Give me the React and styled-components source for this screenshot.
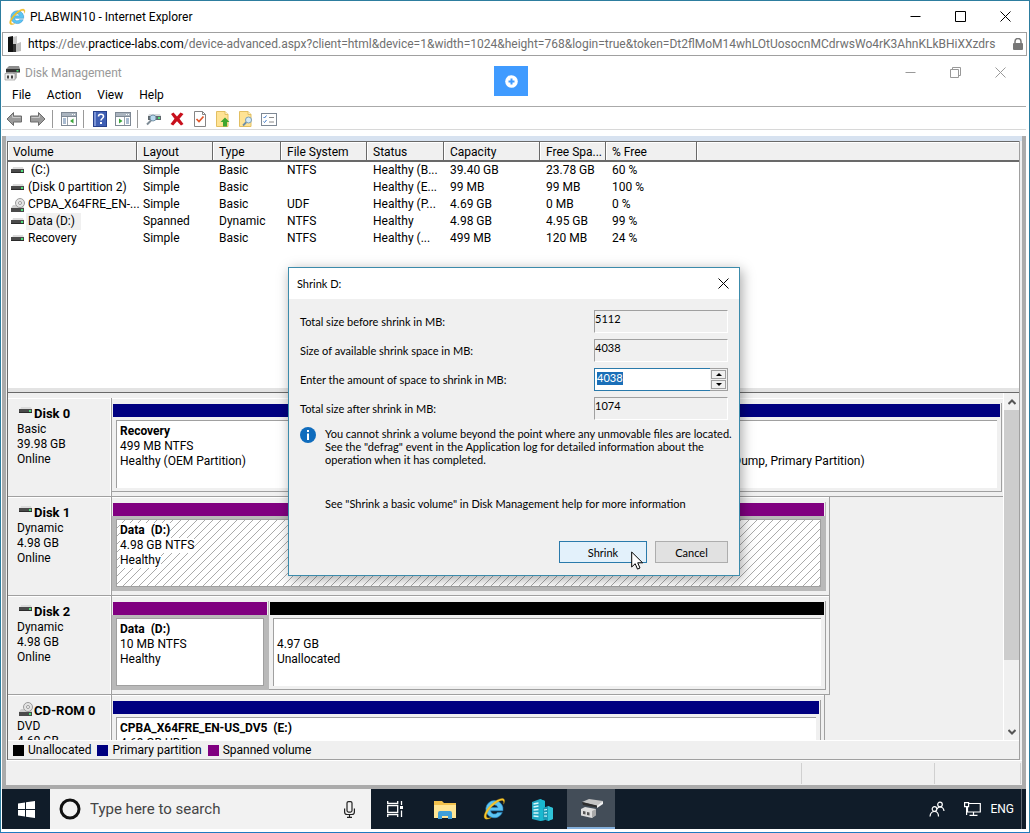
import styled, { createGlobalStyle, css } from 'styled-components';

const COLORS = {
  face: '#f0f0f0',
  shadow: '#a0a0a0',
  dark: '#696969',
  frame: '#ababab',
  navy: '#000080',
  purple: '#800080',
  black: '#000000',
  taskbar: '#101c29',
  accent: '#2d7d9f',
};

const VOLUMES = [
  { name: '(C:)', indent: true, layout: 'Simple', type: 'Basic', fs: 'NTFS', status: 'Healthy (B...', capacity: '39.40 GB', free: '23.78 GB', percent: '60 %' },
  { name: '(Disk 0 partition 2)', layout: 'Simple', type: 'Basic', fs: '', status: 'Healthy (E...', capacity: '99 MB', free: '99 MB', percent: '100 %' },
  { name: 'CPBA_X64FRE_EN-...', disc: true, layout: 'Simple', type: 'Basic', fs: 'UDF', status: 'Healthy (P...', capacity: '4.69 GB', free: '0 MB', percent: '0 %' },
  { name: 'Data (D:)', selected: true, layout: 'Spanned', type: 'Dynamic', fs: 'NTFS', status: 'Healthy', capacity: '4.98 GB', free: '4.95 GB', percent: '99 %' },
  { name: 'Recovery', layout: 'Simple', type: 'Basic', fs: 'NTFS', status: 'Healthy (...', capacity: '499 MB', free: '120 MB', percent: '24 %' },
];

const COLUMNS = [
  { label: 'Volume', width: 129 },
  { label: 'Layout', width: 76 },
  { label: 'Type', width: 68 },
  { label: 'File System', width: 86 },
  { label: 'Status', width: 77 },
  { label: 'Capacity', width: 96 },
  { label: 'Free Spa...', width: 66 },
  { label: '% Free', width: 91 },
];

const DISKS = [
  {
    name: 'Disk 0',
    lines: ['Basic', '39.98 GB', 'Online'],
    full: true,
    share: '100%',
    partitions: [
      { color: 'navy', grow: 190, title: 'Recovery', lines: ['499 MB NTFS', 'Healthy (OEM Partition)'] },
      { color: 'navy', grow: 253, title: '', lines: ['99 MB'] },
      { color: 'navy', grow: 442, title: '', lines: ['39.40 GB NTFS', 'Healthy (Boot, Page File, Crash Dump, Primary Partition)'] },
    ],
  },
  {
    name: 'Disk 1',
    lines: ['Dynamic', '4.98 GB', 'Online'],
    share: '718px',
    partitions: [
      { color: 'purple', grow: 1, title: 'Data  (D:)', lines: ['4.98 GB NTFS', 'Healthy'], active: true, hatched: true },
    ],
  },
  {
    name: 'Disk 2',
    lines: ['Dynamic', '4.98 GB', 'Online'],
    share: '718px',
    partitions: [
      { color: 'purple', grow: 155, title: 'Data  (D:)', lines: ['10 MB NTFS', 'Healthy'], active: true },
      { color: 'black', grow: 558, title: '', lines: ['4.97 GB', 'Unallocated'] },
    ],
  },
  {
    name: 'CD-ROM 0',
    disc: true,
    lines: ['DVD', '4.69 GB', 'Online'],
    share: '713px',
    partitions: [
      { color: 'navy', grow: 1, title: 'CPBA_X64FRE_EN-US_DV5  (E:)', lines: ['4.69 GB UDF', 'Healthy (Primary Partition)'] },
    ],
  },
];

const LEGEND = [
  { label: 'Unallocated', color: 'black' },
  { label: 'Primary partition', color: 'navy' },
  { label: 'Spanned volume', color: 'purple' },
];

/* ---------- icons ---------- */

function ExplorerLogo({ size }) {
  return (
    <svg width={size} height={size} viewBox="0 0 24 24" aria-hidden="true">
      <path
        d="M12.4 3.6a8.6 8.6 0 1 0 7.9 12h-4.9a3.9 3.9 0 0 1-6.9-1.8h12.4a8.6 8.6 0 0 0-8.5-10.2zM8.6 10.4a3.9 3.9 0 0 1 7.3 0z"
        fill="#5cc4f2"
        stroke="#2788c8"
        strokeWidth="0.6"
      />
      <path
        d="M21.6 7.2c1.6-3 1.3-5.2-.6-5.7-2.6-.6-7.3 1.7-11.6 5.7C4 12.3 1 18.5 2.6 21.2c1 1.6 3.7 1.2 6.8-.6-2.5.6-4.3.5-4.9-.6-.9-1.9 1.500-6.4 5.500-10.400C14 5.600 18.700 2.800 20.600 3.500c1 .4 1.400 1.700 1 3.700z"
        fill="#f6c62c"
        stroke="#d39a12"
        strokeWidth="0.3"
      />
    </svg>
  );
}

function DriveIcon() {
  return (
    <svg width="14" height="12" viewBox="0 0 14 12" aria-hidden="true">
      <path d="M2 2h10l1 3H1z" fill="#dcdcdc" />
      <rect x="0" y="4" width="13" height="4" fill="#4a4a4a" />
      <rect x="0" y="7" width="13" height="1" fill="#2a2a2a" />
      <rect x="10" y="5" width="2" height="2" fill="#4fe07a" />
    </svg>
  );
}

function DiscIcon() {
  return (
    <svg width="14" height="14" viewBox="0 0 14 14" aria-hidden="true">
      <path d="M2 7h10l1 3H0z" fill="#cfcfcf" />
      <rect x="0" y="10" width="13" height="4" fill="#4a4a4a" />
      <rect x="10" y="11" width="2" height="2" fill="#4fe07a" />
      <circle cx="9" cy="5" r="4.500" fill="#e4e4e4" stroke="#9a9a9a" />
      <circle cx="9" cy="5" r="1.500" fill="#fff" stroke="#9a9a9a" />
    </svg>
  );
}

function ManagementIcon() {
  return (
    <svg width="16" height="16" viewBox="0 0 16 16" aria-hidden="true">
      <path d="M5 1h10l1 3H2z" fill="#8d8d8d" />
      <path d="M2 4h14v3.500H2z" fill="#333" />
      <rect x="12.500" y="5" width="2" height="1.500" fill="#4fe07a" />
      <path d="M9 8h4v5l-3 2H9z" fill="#b5b5b5" />
      <path d="M1 8.500h10v6.500H1z" fill="#ececec" stroke="#888" strokeWidth="0.6" />
      <path d="M3 10.500h2v3H3zM7 10.500h2v3H7z" fill="#444" />
    </svg>
  );
}

function ArrowIcon({ flip }) {
  return (
    <svg width="17" height="16" viewBox="0 0 17 16" aria-hidden="true">
      <path
        d={flip ? 'M16 8L9.500 1.500V5H1.500v6h8v3.500z' : 'M1 8l6.500-6.500V5h8v6h-8v3.500z'}
        fill="#9b9b9b"
        stroke="#6c6c6c"
      />
      <path d={flip ? 'M2.500 6.500h8V4' : 'M14.500 6.500h-8V4'} fill="none" stroke="#c9c9c9" />
    </svg>
  );
}

function PaneIcon({ right }) {
  return (
    <svg width="16" height="14" viewBox="0 0 16 14" aria-hidden="true">
      <rect x="0.500" y="0.500" width="15" height="13" fill="#fff" stroke="#7e8894" />
      <rect x="1" y="1" width="14" height="3" fill="#aab4bf" />
      <path d="M11 2.500h1M13 2.500h1" stroke="#fff" />
      <path d="M1 4.500h14" stroke="#7e8894" />
      <path d={right ? 'M9.500 5v8' : 'M6.500 5v8'} stroke="#9aa3ad" />
      <path d={right ? 'M11 7h3M11 9h3M11 11h3' : 'M2 7h3M2 9h3M2 11h3'} stroke="#5579a5" />
      <path d={right ? 'M4 6.500v5L7.500 9z' : 'M12.500 6.500v5L9 9z'} fill="#3ba53b" />
    </svg>
  );
}

function HelpIcon() {
  return (
    <svg width="14" height="16" viewBox="0 0 14 16" aria-hidden="true">
      <rect x="0.500" y="0.500" width="13" height="15" fill="#3f5fb4" stroke="#26408c" />
      <rect x="1" y="1" width="2" height="14" fill="#7c95d6" />
      <path d="M5.500 5.500c0-3 5-3 5 0 0 2-2.500 2-2.500 4" fill="none" stroke="#fff" strokeWidth="1.600" />
      <rect x="7" y="11" width="2" height="2" fill="#fff" />
    </svg>
  );
}

function SettingsDriveIcon() {
  return (
    <svg width="16" height="14" viewBox="0 0 16 14" aria-hidden="true">
      <path d="M3 2h11l1 2H2z" fill="#d5d9dd" />
      <rect x="2" y="4" width="13" height="4" fill="#5f676d" />
      <rect x="12" y="5" width="2" height="2" fill="#4fe07a" />
      <circle cx="7" cy="6" r="3" fill="#b9d9ee" stroke="#7594a8" />
      <path d="M5 8.500L1 12.500" stroke="#7d8b95" strokeWidth="2" />
    </svg>
  );
}

function DeleteIcon() {
  return (
    <svg width="14" height="14" viewBox="0 0 14 14" aria-hidden="true">
      <path
        d="M1 2l2.500-1.500L7 4.500l3.500-4L13.500 2 9.500 6.800 13.500 12l-2.500 1.500L7 9.200l-3.800 4.300L.5 12l4-5.200z"
        fill="#c8101c"
      />
    </svg>
  );
}

function CheckDocIcon() {
  return (
    <svg width="12" height="16" viewBox="0 0 12 16" aria-hidden="true">
      <path d="M0.500 0.500h8l3 3v12H0.500z" fill="#fff" stroke="#858585" />
      <path d="M8.500 0.500v3h3" fill="none" stroke="#858585" />
      <path d="M2.500 8l2.500 2.500 4.500-5" fill="none" stroke="#e0562a" strokeWidth="1.700" />
    </svg>
  );
}

function FolderIcon({ search }) {
  return (
    <svg width="14" height="16" viewBox="0 0 14 16" aria-hidden="true">
      <path d="M0.500 0.500h8.500l3 3v12H0.500z" fill="#ffe394" stroke="#e2bf62" />
      <path d="M9 0.500v3h3" fill="#fff3cc" stroke="#e2bf62" />
      {search ? (
        <>
          <path d="M7.500 11L4 14.500" stroke="#6c8ea8" strokeWidth="1.800" />
          <circle cx="9.500" cy="9" r="3" fill="#d5ebf8" stroke="#7b9db5" />
        </>
      ) : (
        <path d="M9 6.500l4.500 4.500H11v4.500H7V11H4.500z" fill="#3fa62f" />
      )}
    </svg>
  );
}

function ListIcon() {
  return (
    <svg width="16" height="13" viewBox="0 0 16 13" aria-hidden="true">
      <rect x="0.500" y="0.500" width="15" height="12" fill="#fff" stroke="#7e8894" />
      <path d="M2.500 4l1 1 2-2.500M2.500 8.500l1 1 2-2.500" fill="none" stroke="#3c78c8" />
      <path d="M8 4.500h5M8 9h5" stroke="#8a8a8a" />
    </svg>
  );
}

function WindowGlyph({ kind }) {
  const paths = {
    minimize: 'M0.500 5.500h10',
    maximize: 'M0.500 0.500h10v10h-10z',
    restore: 'M0.500 2.500h8v8h-8zM2.500 2.500v-2h8v8h-2',
    close: 'M0.500 0.500l10 10M10.500 0.500l-10 10',
  };
  return (
    <svg width="11" height="11" viewBox="0 0 11 11" aria-hidden="true">
      <path d={paths[kind]} fill="none" stroke="currentColor" />
    </svg>
  );
}

function CursorIcon() {
  return (
    <svg width="13" height="20" viewBox="0 0 13 20" aria-hidden="true">
      <path
        d="M0.700 1v15l3.500-3.300 2.300 5.400 2.500-1.100-2.300-5.200h4.900z"
        fill="#fff"
        stroke="#000"
      />
    </svg>
  );
}

/* ---------- page ---------- */

function WindowButtons({ restored }) {
  return (
    <ButtonGroup $faded={restored}>
      <button type="button" aria-label="Minimize">
        <WindowGlyph kind="minimize" />
      </button>
      <button type="button" aria-label="Maximize">
        <WindowGlyph kind={restored ? 'restore' : 'maximize'} />
      </button>
      <button type="button" aria-label="Close">
        <WindowGlyph kind="close" />
      </button>
    </ButtonGroup>
  );
}

function VolumeList() {
  return (
    <ListPane>
      <VolumeTable>
        <colgroup>
          {COLUMNS.map(({ label, width }) => (
            <col key={label} width={width} />
          ))}
          <col />
        </colgroup>
        <thead>
          <tr>
            {COLUMNS.map(({ label }) => (
              <th key={label} scope="col">
                {label}
              </th>
            ))}
            <td />
          </tr>
        </thead>
        <tbody>
          {VOLUMES.map(volume => (
            <tr key={volume.name}>
              <td>
                <VolumeName>
                  {volume.disc ? <DiscIcon /> : <DriveIcon />}
                  <VolumeLabel $selected={volume.selected} $indent={volume.indent}>
                    {volume.name}
                  </VolumeLabel>
                </VolumeName>
              </td>
              <td>{volume.layout}</td>
              <td>{volume.type}</td>
              <td>{volume.fs}</td>
              <td>{volume.status}</td>
              <td>{volume.capacity}</td>
              <td>{volume.free}</td>
              <td>{volume.percent}</td>
              <td />
            </tr>
          ))}
        </tbody>
      </VolumeTable>
    </ListPane>
  );
}

function DiskRow({ disk }) {
  return (
    <Disk>
      <DiskLabel>
        <DiskName>
          {disk.disc ? <DiscIcon /> : <DriveIcon />}
          {disk.name}
        </DiskName>
        {disk.lines.map(line => (
          <div key={line}>{line}</div>
        ))}
      </DiskLabel>
      <Partitions $share={disk.share} $full={disk.full}>
        {disk.partitions.map(part => (
          <Partition key={part.lines[0]} $grow={part.grow} $active={part.active}>
            <ColorBar $color={COLORS[part.color]} />
            <PartitionBox $hatched={part.hatched} $active={part.active}>
              <strong>{part.title || '\u00a0'}</strong>
              {part.lines.map(line => (
                <span key={line}>{line}</span>
              ))}
            </PartitionBox>
          </Partition>
        ))}
      </Partitions>
    </Disk>
  );
}

function ShrinkDialog() {
  return (
    <Dialog role="dialog" aria-labelledby="shrink-title">
      <DialogTitle>
        <span id="shrink-title">Shrink D:</span>
        <button type="button" aria-label="Close dialog">
          <WindowGlyph kind="close" />
        </button>
      </DialogTitle>
      <DialogBody>
        <Field>
          <label htmlFor="before">Total size before shrink in MB:</label>
          <ReadOnlyInput id="before" value="5112" readOnly />
        </Field>
        <Field>
          <label htmlFor="available">Size of available shrink space in MB:</label>
          <ReadOnlyInput id="available" value="4038" readOnly />
        </Field>
        <Field>
          <label htmlFor="amount">Enter the amount of space to shrink in MB:</label>
          <Spinner>
            <AmountInput id="amount" defaultValue="4038" />
            <SpinButtons>
              <button type="button" aria-label="Increase">
                <svg width="6" height="3" viewBox="0 0 6 3"><path d="M0 3l3-3 3 3z" /></svg>
              </button>
              <button type="button" aria-label="Decrease">
                <svg width="6" height="3" viewBox="0 0 6 3"><path d="M0 0l3 3 3-3z" /></svg>
              </button>
            </SpinButtons>
          </Spinner>
        </Field>
        <Field>
          <label htmlFor="after">Total size after shrink in MB:</label>
          <ReadOnlyInput id="after" value="1074" readOnly />
        </Field>
        <Info>
          <svg width="16" height="16" viewBox="0 0 16 16" aria-hidden="true">
            <circle cx="8" cy="8" r="8" fill="#0f6cbd" />
            <path d="M7 3h2v2H7zM7 6.500h2V13H7z" fill="#fff" />
          </svg>
          <div>
            <p>
              You cannot shrink a volume beyond the point where any unmovable files are located.
              <br />
              See the "defrag" event in the Application log for detailed information about the
              <br />
              operation when it has completed.
            </p>
            <p>See "Shrink a basic volume" in Disk Management help for more information</p>
          </div>
        </Info>
        <DialogActions>
          <DialogButton type="button" $primary>
            Shrink
            <Pointer>
              <CursorIcon />
            </Pointer>
          </DialogButton>
          <DialogButton type="button">Cancel</DialogButton>
        </DialogActions>
      </DialogBody>
    </Dialog>
  );
}

function Taskbar() {
  return (
    <TaskbarBlock>
      <TaskButton type="button" aria-label="Start" $narrow>
        <svg width="17" height="17" viewBox="0 0 17 17">
          <path d="M0 2.500l7-1v6.500H0zM8 1.300L17 0v8H8zM0 9h7v6.500l-7-1zM8 9h9v8l-9-1.300z" fill="#fff" />
        </svg>
      </TaskButton>
      <SearchBox>
        <svg width="22" height="22" viewBox="0 0 22 22" aria-hidden="true">
          <circle cx="11" cy="11" r="9" fill="none" stroke="#111" strokeWidth="3" />
        </svg>
        <input aria-label="Search" placeholder="Type here to search" />
        <svg width="11" height="17" viewBox="0 0 11 17" aria-hidden="true">
          <rect x="3" y="0.600" width="5" height="10.500" rx="1.500" fill="none" stroke="#222" strokeWidth="1.200" />
          <path d="M0.600 7.500V11q0 2.500 2.500 2.500h4.800q2.500 0 2.500-2.500V7.500M5.500 13.500V16M3 16.300h5" fill="none" stroke="#222" strokeWidth="1.200" />
        </svg>
      </SearchBox>
      <TaskButton type="button" aria-label="Task view">
        <svg width="17" height="16" viewBox="0 0 17 16">
          <path d="M0.700 0v2.500h10V0M0.700 16v-2.500h10V16M0.700 4.700h10v6.600h-10zM14.500 0v4M14.500 9.500V16" fill="none" stroke="#fff" strokeWidth="1.300" />
          <rect x="13" y="5" width="3" height="3" fill="#fff" />
        </svg>
      </TaskButton>
      <TaskButton type="button" aria-label="File Explorer">
        <svg width="22" height="19" viewBox="0 0 22 19">
          <path d="M0 1h8l2 2h12v15H0z" fill="#f2c14c" />
          <path d="M0 5h22v13H0z" fill="#ffe594" />
          <path d="M4 19v-6q0-2 2-2h10q2 0 2 2v6h-4v-3H8v3z" fill="#3f9fd8" />
        </svg>
      </TaskButton>
      <TaskButton type="button" aria-label="Internet Explorer">
        <ExplorerLogo size={24} />
      </TaskButton>
      <TaskButton type="button" aria-label="Server Manager">
        <svg width="23" height="23" viewBox="0 0 23 23">
          <path d="M1 4l8-3 5 2v19L9 23l-8-2z" fill="#22a9c4" />
          <path d="M9 1l5 2v19l-5 1z" fill="#19b9d0" />
          <path d="M2.500 6l5-1M2.500 9l5-1M2.500 12l5-.5M2.500 15l5 0M2.500 18l5 .5" stroke="#d6f8fc" strokeWidth="1.400" />
          <path d="M12 10l5-2 5 2v11l-5 2-5-2z" fill="#1c9ab5" />
          <path d="M17 8l5 2v11l-5 2z" fill="#2fc3d8" />
          <path d="M13 12l3-.5M13 15l3-.3M13 18l3 .2" stroke="#d6f8fc" strokeWidth="1.200" />
        </svg>
      </TaskButton>
      <TaskButton type="button" aria-label="Disk Management" $current $narrow>
        <svg width="23" height="21" viewBox="0 0 23 21">
          <path d="M2 3l7-3 14 2-6 5z" fill="#c4c4c4" />
          <path d="M2 3l15 3.500v2L3 6z" fill="#2e2e2e" />
          <path d="M17 6.500L23 2v3l-6 4z" fill="#f0f0f0" />
          <path d="M1 10l4-2 11 2v6l-4 3-11-2.500z" fill="#dedede" />
          <path d="M12 12l4-2v6l-4 3z" fill="#a9a9a9" />
          <path d="M3 12l2.500.5v3L3 15zM7 13l2.500.5v3L7 16z" fill="#555" />
        </svg>
      </TaskButton>
      <Tray>
        <svg width="16" height="16" viewBox="0 0 16 16" aria-hidden="true">
          <g fill="none" stroke="#fff" strokeWidth="1.200">
            <circle cx="5.500" cy="8" r="2.300" />
            <path d="M1 15.500q.5-5 4.500-5t4 5" />
            <circle cx="11" cy="3.500" r="2.300" />
            <path d="M8 8q1-2 3-2 3.500 0 4 4" />
          </g>
        </svg>
        <svg width="17" height="14" viewBox="0 0 17 14" aria-hidden="true">
          <path d="M5 1.500h11.300v8.500H3.500V5M9.500 10v3M5.500 13.300h8M0.600 0.600h4v4h-4zM2.600 4.600V13" fill="none" stroke="#fff" strokeWidth="1.200" />
        </svg>
        <span>ENG</span>
      </Tray>
    </TaskbarBlock>
  );
}

function App() {
  return (
    <>
      <GlobalStyle />
      <BrowserWindow>
        <BrowserTitle>
          <ExplorerLogo size={18} />
          <span>PLABWIN10 - Internet Explorer</span>
          <WindowButtons />
        </BrowserTitle>
        <AddressBar>
          <svg width="16" height="16" viewBox="0 0 16 16" aria-hidden="true">
            <path d="M1 1l5-1v16H1z" fill="#111" />
            <path d="M6 8h3v8H6z" fill="#333" />
            <path d="M6 1l4-1v8H6z" fill="#c9c9c9" />
            <path d="M9 8l5-2v9l-5 1z" fill="#bdbdbd" />
          </svg>
          <Url href="https://dev.practice-labs.com/device-advanced.aspx">
            <b>https</b>://dev.<b>practice-labs.com</b>
            /device-advanced.aspx?client=html&amp;device=1&amp;width=1024&amp;height=768&amp;login=true&amp;token=Dt2flMoM14whLOtUosocnMCdrwsWo4rK3AhnKLkBHiXXzdrs
          </Url>
          <svg width="10" height="12" viewBox="0 0 10 12" aria-hidden="true">
            <rect y="5" width="10" height="7" rx="1" fill="#777" />
            <path d="M2 5V3.500a3 3 0 0 1 6 0V5" fill="none" stroke="#777" strokeWidth="1.500" />
          </svg>
        </AddressBar>
        <RemoteDesktop>
          <AppTitle>
            <ManagementIcon />
            <span>Disk Management</span>
            <WindowButtons restored />
            <ConnectionTab type="button" aria-label="Connection bar">
              <svg width="13" height="13" viewBox="0 0 13 13" aria-hidden="true">
                <circle cx="6.500" cy="6.500" r="6.300" fill="#fff" />
                <path d="M6.500 3.500v6M3.500 6.500h6" stroke="#409bff" strokeWidth="2" />
              </svg>
            </ConnectionTab>
          </AppTitle>
          <MenuBar>
            <button type="button">File</button>
            <button type="button">Action</button>
            <button type="button">View</button>
            <button type="button">Help</button>
          </MenuBar>
          <Toolbar>
            <button type="button" aria-label="Back"><ArrowIcon /></button>
            <button type="button" aria-label="Forward"><ArrowIcon flip /></button>
            <Divider />
            <button type="button" aria-label="Show console tree"><PaneIcon /></button>
            <Divider />
            <button type="button" aria-label="Help topics"><HelpIcon /></button>
            <button type="button" aria-label="Show action pane"><PaneIcon right /></button>
            <Divider />
            <button type="button" aria-label="Settings"><SettingsDriveIcon /></button>
            <button type="button" aria-label="Delete"><DeleteIcon /></button>
            <button type="button" aria-label="Properties"><CheckDocIcon /></button>
            <button type="button" aria-label="Open"><FolderIcon /></button>
            <button type="button" aria-label="Explore"><FolderIcon search /></button>
            <button type="button" aria-label="View settings"><ListIcon /></button>
          </Toolbar>
          <Console>
            <ActiveStrip />
            <Panes>
              <VolumeList />
              <GraphPane>
                <DiskArea>
                  <Disks>
                    {DISKS.map(disk => (
                      <DiskRow key={disk.name} disk={disk} />
                    ))}
                  </Disks>
                  <ScrollBar>
                    <button type="button" aria-label="Scroll up">
                      <svg width="8" height="6" viewBox="0 0 8 6"><path d="M0.500 5L4 1.500 7.500 5" /></svg>
                    </button>
                    <ScrollThumb />
                    <button type="button" aria-label="Scroll down">
                      <svg width="8" height="6" viewBox="0 0 8 6"><path d="M0.500 1L4 4.500 7.500 1" /></svg>
                    </button>
                  </ScrollBar>
                </DiskArea>
                <Legend>
                  {LEGEND.map(({ label, color }) => (
                    <li key={label}>
                      <Swatch $color={COLORS[color]} />
                      {label}
                    </li>
                  ))}
                </Legend>
              </GraphPane>
            </Panes>
            <StatusBar>
              <span />
              <span />
              <span />
            </StatusBar>
          </Console>
          <Taskbar />
          <ShrinkDialog />
        </RemoteDesktop>
      </BrowserWindow>
    </>
  );
}

const GlobalStyle = createGlobalStyle`
  * {
    box-sizing: border-box;
  }

  body {
    margin: 0;
    font-family: Roboto, 'Noto Sans', sans-serif;
    font-size: 12px;
    color: #000;
    background: #fff;
  }

  button,
  input {
    font: inherit;
    color: inherit;
  }

  button {
    padding: 0;
    border: 0;
    background: none;
  }

  svg {
    display: block;
    flex-shrink: 0;
  }
`;

const BrowserWindow = styled.div`
  display: flex;
  flex-direction: column;
  height: 100vh;
  min-height: 640px;
  overflow: hidden;
  border: 1px solid ${COLORS.accent};
  border-bottom-color: #1f7ac0;
  padding: 0 3px 3px 1px;
  background: #fff;
`;

const BrowserTitle = styled.header`
  display: flex;
  align-items: center;
  gap: 4px;
  flex: 0 0 31px;
  padding-left: 6px;
`;

const ButtonGroup = styled.div`
  display: flex;
  margin-left: auto;
  color: ${({ $faded }) => ($faded ? '#999' : '#000')};
  padding-right: ${({ $faded }) => ($faded ? '3px' : '0')};
  margin-right: ${({ $faded }) => ($faded ? '0' : '-2px')};

  button {
    display: grid;
    place-items: center;
    width: 45px;
    height: 26px;
  }
`;

const AddressBar = styled.div`
  display: flex;
  align-items: center;
  gap: 5px;
  flex: 0 0 24px;
  margin-right: -1px;
  padding: 0 3px 0 4px;
  border: 1px solid ${COLORS.shadow};
`;

const Url = styled.a`
  flex: 1;
  min-width: 0;
  overflow: hidden;
  white-space: nowrap;
  color: #707070;
  text-decoration: none;

  b {
    font-weight: normal;
    color: #000;
  }
`;

const RemoteDesktop = styled.main`
  position: relative;
  display: flex;
  flex-direction: column;
  flex: 1;
  min-height: 0;
`;

const AppTitle = styled.div`
  display: flex;
  align-items: center;
  gap: 5px;
  flex: 0 0 30px;
  padding: 3px 0 0 2px;
  color: #999;
`;

const ConnectionTab = styled.button`
  position: absolute;
  top: 10px;
  left: calc(50% - 20px);
  display: grid;
  place-items: center;
  width: 34px;
  height: 30px;
  background: #409bff;
`;

const MenuBar = styled.nav`
  display: flex;
  gap: 16px;
  flex: 0 0 21px;
  padding: 0 0 2px 10px;
  border-bottom: 1px solid #aaa;
`;

const Toolbar = styled.div`
  display: flex;
  align-items: center;
  flex: 0 0 23px;
  padding: 2px 0 0 1px;
  border-bottom: 1px solid #d8d8d8;

  button {
    display: grid;
    place-items: center;
    width: 23px;
    height: 20px;
  }
`;

const Divider = styled.i`
  width: 1px;
  height: 18px;
  margin: 0 4px 0 3px;
  background: #999;
`;

const Console = styled.div`
  display: flex;
  flex-direction: column;
  flex: 1;
  min-height: 0;
  margin-top: 6px;
  border: solid ${COLORS.frame};
  border-width: 0 4px 4px 4px;
  background: ${COLORS.face};
`;

const ActiveStrip = styled.div`
  flex: 0 0 5px;
  background: #d7e2f0;
`;

const Panes = styled.div`
  display: flex;
  flex-direction: column;
  flex: 1;
  min-height: 0;
  margin: 0 2px 0 1px;
  border-left: 1px solid ${COLORS.dark};
  border-right: 1px solid ${COLORS.shadow};
`;

const ListPane = styled.section`
  flex: 0 0 252px;
  border-top: 1px solid ${COLORS.dark};
  border-bottom: 1px solid ${COLORS.dark};
  box-shadow: inset 0 -4px #e3e3e3;
  background: #fff;
`;

const VolumeTable = styled.table`
  width: 100%;
  table-layout: fixed;
  border-collapse: separate;
  border-spacing: 0;
  white-space: nowrap;

  thead > tr > * {
    height: 20px;
    padding: 1px 0 0 6px;
    border: 1px solid ${COLORS.dark};
    border-width: 0 1px 2px 0;
    box-shadow: inset 1px 1px #fff;
    background: ${COLORS.face};
    text-align: left;
    font-weight: normal;
  }

  thead th:first-child {
    padding-left: 5px;
  }

  thead td:last-child {
    border-right: 0;
  }

  tbody td {
    height: 17px;
    padding: 0 0 0 6px;
    line-height: 17px;
  }

  tbody td:first-child {
    padding-left: 3px;
  }
`;

const VolumeName = styled.div`
  display: flex;
  align-items: center;
  gap: 1px;
`;

const VolumeLabel = styled.span`
  padding: 0 6px 0 ${({ $indent }) => ($indent ? '5px' : '2px')};
  background: ${({ $selected }) => ($selected ? COLORS.face : 'none')};
`;

const GraphPane = styled.section`
  display: flex;
  flex-direction: column;
  flex: 1;
  min-height: 0;
  border-bottom: 1px solid ${COLORS.shadow};
`;

const DiskArea = styled.div`
  display: flex;
  flex: 1;
  min-height: 0;
`;

const Disks = styled.div`
  flex: 1;
  min-width: 0;
  overflow: hidden;
  padding-top: 5px;
`;

const Disk = styled.article`
  display: flex;
  height: 99px;
`;

const DiskLabel = styled.div`
  flex: 0 0 104px;
  padding: 7px 0 0 9px;
  border: solid ${COLORS.shadow};
  border-width: 0 1px 1px 0;
  box-shadow: inset -1px 1px #fff;
  line-height: 15px;
`;

const DiskName = styled.strong`
  display: flex;
  align-items: center;
  gap: 1px;
  height: 17px;
  padding-left: 2px;
  font-size: 13px;

  svg {
    align-self: flex-start;
  }
`;

const Partitions = styled.div`
  display: flex;
  flex: 0 1 ${({ $share }) => $share};
  min-width: 0;
  padding: 5px ${({ $full }) => ($full ? '1px' : '3px')} 4px 0;
  border: solid ${COLORS.shadow};
  border-width: 0 ${({ $full }) => ($full ? '0' : '1px')} 1px 0;
  box-shadow: inset 0 1px #fff;
`;

const Partition = styled.div`
  display: flex;
  flex-direction: column;
  flex: ${({ $grow }) => $grow} 1 0;
  min-width: 0;
  padding: 1px 1px 0 1px;
  border: solid ${COLORS.shadow};
  border-width: 0 1px 1px 0;

  ${({ $active }) =>
    $active &&
    css`
      border-color: #b9b9b9;
      background: linear-gradient(#b9b9b9, #b9b9b9) 0 14px no-repeat;
    `}
`;

const ColorBar = styled.div`
  flex: 0 0 13px;
  background: ${({ $color }) => $color};
`;

const PartitionBox = styled.div`
  flex: 1;
  margin: 3px;
  padding: 3px 0 0 3px;
  border: solid ${COLORS.shadow};
  border-width: ${({ $active }) => ($active ? '1px' : '1px 0 0 1px')};
  background: #fff;
  line-height: 15px;
  white-space: nowrap;

  ${({ $hatched }) =>
    $hatched &&
    css`
      background: linear-gradient(
          135deg,
          #aaa 5%,
          #fff 5%,
          #fff 45%,
          #aaa 45%,
          #aaa 55%,
          #fff 55%,
          #fff 95%,
          #aaa 95%
        )
        0 0 / 8px 8px;
    `}

  strong,
  span {
    display: block;
    width: fit-content;
    background: #fff;
  }

  strong {
    white-space: pre;
  }
`;

const ScrollBar = styled.div`
  display: flex;
  flex-direction: column;
  flex: 0 0 16px;
  border-left: 1px solid #fff;

  button {
    display: grid;
    place-items: center;
    flex: 0 0 17px;
  }

  path {
    fill: none;
    stroke: #555;
    stroke-width: 2;
  }
`;

const ScrollThumb = styled.div`
  height: 72%;
  margin-bottom: auto;
  background: #cdcdcd;
`;

const Legend = styled.ul`
  display: flex;
  align-items: center;
  gap: 6px;
  flex: 0 0 19px;
  margin: 0;
  padding: 0 0 0 5px;
  border-top: 1px solid #fff;
  list-style: none;

  li {
    display: flex;
    align-items: center;
    gap: 4px;
  }
`;

const Swatch = styled.i`
  width: 11px;
  height: 11px;
  background: ${({ $color }) => $color};
`;

const StatusBar = styled.footer`
  display: flex;
  flex: 0 0 25px;
  padding: 2px 1px 1px 0;
  border-top: 1px solid #fff;

  span {
    flex: 0 0 133px;
    border-right: 1px solid #d0d0d0;
  }

  span:first-child {
    flex: 1;
  }

  span:last-child {
    flex-basis: 86px;
  }
`;

const TaskbarBlock = styled.footer`
  display: flex;
  flex: 0 0 40px;
  background: ${COLORS.taskbar};
`;

const TaskButton = styled.button`
  display: grid;
  place-items: center;
  flex: 0 0 ${({ $narrow }) => ($narrow ? '48px' : '49px')};

  ${({ $current }) =>
    $current &&
    css`
      background: #434d58;
      box-shadow: inset 0 -2px #84b0dc;
    `}
`;

const SearchBox = styled.div`
  display: flex;
  align-items: center;
  gap: 9px;
  flex: 0 1 321px;
  padding: 0 16px 0 9px;
  background: #f2f2f2;

  input {
    flex: 1;
    min-width: 0;
    padding: 0;
    border: 0;
    outline: 0;
    background: none;
    font-size: 15px;
  }

  input::placeholder {
    color: #444;
    opacity: 1;
  }
`;

const Tray = styled.div`
  display: flex;
  align-items: center;
  margin: 0 4px 0 auto;
  padding-right: 7px;
  border-right: 1px solid #5d6670;
  color: #fff;

  svg {
    margin-right: 19px;
  }

  svg + svg {
    margin-right: 9px;
  }
`;

const Dialog = styled.section`
  position: absolute;
  top: 211px;
  left: 286px;
  width: 452px;
  border: 1px solid #3c8bab;
  background: ${COLORS.face};
  box-shadow: 2px 3px 12px rgba(0, 0, 0, 0.35);
  font-family: Lato, 'Liberation Sans', sans-serif;
  font-size: 11px;
`;

const DialogTitle = styled.div`
  display: flex;
  align-items: center;
  justify-content: space-between;
  height: 31px;
  padding: 0 10px 0 8px;
  background: #fff;
`;

const DialogBody = styled.div`
  padding: 11px 11px 12px;
`;

const Field = styled.div`
  display: flex;
  align-items: center;
  justify-content: space-between;
  height: 22px;
  margin-bottom: 7px;
`;

const ReadOnlyInput = styled.input`
  width: 134px;
  height: 23px;
  padding: 0 0 6px;
  border: 1px solid;
  border-color: ${COLORS.shadow} #fff #fff ${COLORS.shadow};
  outline: 0;
  background: ${COLORS.face};
`;

const Spinner = styled.div`
  display: flex;
  width: 134px;
  height: 23px;
  border: 1px solid ${COLORS.shadow};
`;

const AmountInput = styled.input`
  flex: 1;
  min-width: 0;
  margin: -1px 0 -1px -1px;
  padding: 0 2px 3px;
  border: 1px solid #2a7aab;
  border-right: 0;
  outline: 0;
  background: linear-gradient(#1a6fb8, #1a6fb8) 2px 3px / 26px 13px no-repeat #fff;
  color: #fff;
`;

const SpinButtons = styled.div`
  display: flex;
  flex-direction: column;
  gap: 1px;
  width: 17px;
  padding: 1px;

  button {
    display: grid;
    place-items: center;
    flex: 1;
    border: 1px solid ${COLORS.shadow};
  }
`;

const Info = styled.div`
  display: flex;
  gap: 9px;
  padding-top: 1px;
  line-height: 13px;
  white-space: nowrap;

  p {
    margin: 0 0 31px;
  }
`;

const DialogActions = styled.div`
  display: flex;
  justify-content: flex-end;
  gap: 8px;
`;

const DialogButton = styled.button`
  position: relative;
  width: ${({ $primary }) => ($primary ? '88px' : '73px')};
  height: 22px;
  border: 1px solid ${({ $primary }) => ($primary ? '#2a7aab' : '#adadad')};
  background: ${({ $primary }) => ($primary ? '#e3f1fb' : '#e1e1e1')};
`;

const Pointer = styled.i`
  position: absolute;
  top: 9px;
  right: 2px;
`;

export default App;
